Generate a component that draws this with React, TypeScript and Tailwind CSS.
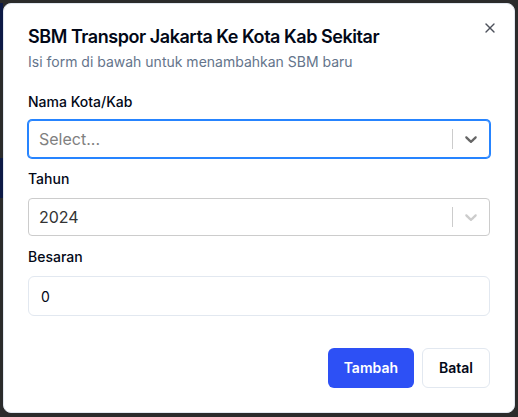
import { X } from "lucide-react";

function Chevron({ className }: { className: string }) {
  return (
    <svg viewBox="0 0 20 20" className={className} fill="currentColor" aria-hidden="true">
      <path d="M4.516 7.548c0.436-0.446 1.043-0.481 1.576 0l3.908 3.747 3.908-3.747c0.533-0.481 1.141-0.446 1.574 0 0.436 0.445 0.408 1.197 0 1.615-0.406 0.418-4.695 4.502-4.695 4.502-0.217 0.223-0.502 0.335-0.787 0.335s-0.57-0.112-0.789-0.335c0 0-4.287-4.084-4.695-4.502s-0.436-1.17 0-1.615z" />
    </svg>
  );
}

function SelectBox({
  value,
  placeholder,
  focused,
}: {
  value?: string;
  placeholder?: string;
  focused?: boolean;
}) {
  return (
    <div
      className={
        focused
          ? "flex h-[38px] items-center rounded-[4px] border border-[#2684FF] bg-white shadow-[0_0_0_1px_#2684FF]"
          : "flex h-[38px] items-center rounded-[4px] border border-[#cccccc] bg-white"
      }
    >
      <div className="flex-1 px-2 py-[2px]">
        {value ? (
          <span className="mx-[2px] text-base text-[#333333]">{value}</span>
        ) : (
          <span className="mx-[2px] text-base text-[#808080]">{placeholder}</span>
        )}
      </div>
      <div className="my-2 w-px self-stretch bg-[#cccccc]" />
      <div className="p-2">
        <Chevron className={focused ? "h-5 w-5 text-[#666666]" : "h-5 w-5 text-[#cccccc]"} />
      </div>
    </div>
  );
}

export default function App() {
  return (
    <div className="flex h-[417px] w-[518px] bg-[#2b2b2b] font-['Inter',sans-serif]">
      <div className="flex w-[3px] flex-col">
        <div className="h-[3px]" />
        <div className="h-[47px] bg-[#0d1a45]" />
        <div className="h-[108px]" />
        <div className="h-[40px] bg-[#0d1a45]" />
      </div>
      <div className="relative mt-[3px] flex h-[410px] w-[512px] flex-col rounded-lg border border-[#e2e8f0] bg-white px-6 pt-[22px]">
        <button className="absolute right-4 top-4 text-[#020817] opacity-70">
          <X className="h-4 w-4" />
        </button>
        <h2 className="text-[18px] font-semibold leading-[22px] tracking-tight text-[#020817]">
          SBM Transpor Jakarta Ke Kota Kab Sekitar
        </h2>
        <p className="mt-1 text-sm leading-5 text-[#64748b]">
          Isi form di bawah untuk menambahkan SBM baru
        </p>

        <label className="mt-5 text-sm font-medium leading-5 text-[#020817]">Nama Kota/Kab</label>
        <div className="mt-2">
          <SelectBox placeholder="Select..." focused />
        </div>

        <label className="mt-[11px] text-sm font-medium leading-5 text-[#020817]">Tahun</label>
        <div className="mt-[9px]">
          <SelectBox value="2024" />
        </div>

        <label className="mt-[11px] text-sm font-medium leading-5 text-[#020817]">Besaran</label>
        <input
          type="text"
          defaultValue="0"
          className="mt-[9px] h-10 w-full rounded-md border border-[#e2e8f0] bg-white px-3 text-sm text-[#020817] outline-none"
        />

        <div className="mt-8 flex justify-end gap-2">
          <button className="h-10 rounded-md bg-[#2d50f5] px-4 text-sm font-semibold text-white">
            Tambah
          </button>
          <button className="h-10 rounded-md border border-[#e2e8f0] bg-white px-4 text-sm font-semibold text-[#020817]">
            Batal
          </button>
        </div>
      </div>
    </div>
  );
}
